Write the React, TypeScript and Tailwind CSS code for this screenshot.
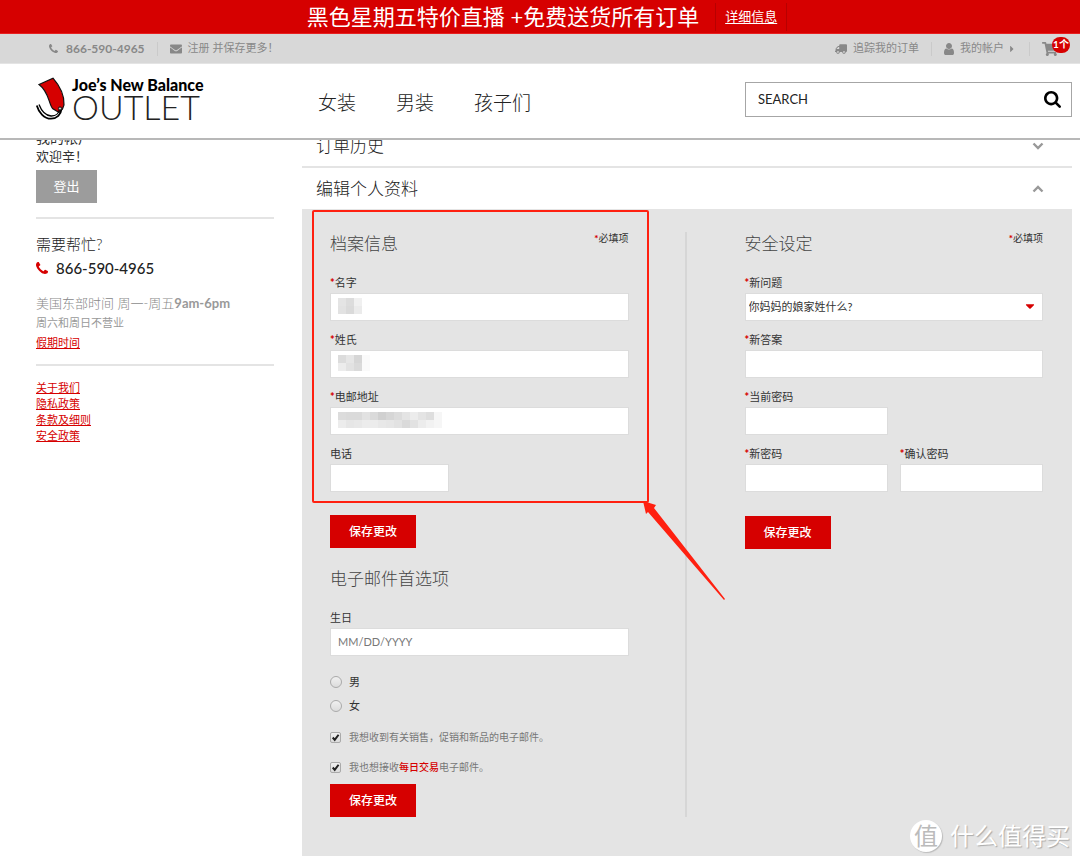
import type { ReactNode } from 'react';
import { FaCaretDown, FaCaretRight, FaEnvelope, FaShoppingCart, FaTruck } from 'react-icons/fa';

const LABEL = 'mb-0.5 block pt-px text-[11px] leading-4 text-[#333]';
const INPUT = 'block h-7 w-full border border-[#dcdcdc] bg-white px-[7px] pb-0.5 text-[11px] text-[#333] outline-none';

// greys of the blurred-out values, row by row
const MASK_FIRST = [
  ['#e4e4e4', '#dcdcdc', '#f0f0f0'],
  ['#e2e2e2', '#dadada', '#ebebeb'],
];
const MASK_LAST = [
  ['#dcdcdc', '#e6e6e6', '#d6d6d6', '#fafafa'],
  ['#ececec', '#e2e2e2', '#dadada', '#fafafa'],
];
const MASK_EMAIL = [
  ['#dcdcdc', '#dadada', '#dadada', '#e2e2e2', '#dadada', '#d0d0d0', '#d6d6d6', '#dcdcdc', '#e4e4e4', '#ececec', '#e4e4e4', '#dedede', '#f6f6f6'],
  ['#ececec', '#e6e6e6', '#e8e8e8', '#ececec', '#ececec', '#e8e8e8', '#e6e6e6', '#e2e2e2', '#dadada', '#e2e2e2', '#ececec', '#f2f2f2', '#f6f6f6'],
];

function PhoneIcon({ className }: { className: string }) {
  return (
    <svg viewBox="0 128 1408 1408" fill="currentColor" className={className}>
      <path d="M1408 1240q0 27-10 70.500t-21 68.500q-21 50-122 106-94 51-186 51-27 0-52.500-3.500t-57.500-12.500-47.500-14.500-55.500-20.500-49-18q-98-35-175-83-128-79-264.500-215.500t-215.500-264.500q-48-77-83-175-3-9-18-49t-20.500-55.500-14.500-47.500-12.500-57.500-3.500-52.500q0-92 51-186 56-101 106-122 25-11 68.500-21t70.500-10q14 0 21 3 18 6 53 76 11 19 30 54t35 63.500 31 53.500q3 4 17.500 25t21.500 35.500 7 28.500q0 20-28.500 50t-62 55-62 53-28.500 46q0 9 5 22.500t8.500 20.500 14 24 11.500 19q76 137 174 235t235 174q2 1 19 11.500t24 14 20.500 8.500 22.500 5q18 0 46-28.500t53-62 55-62 50-28.500q14 0 28.500 7t35.500 21.500 25 17.500q25 15 53.500 31t63.500 35 54 30q70 35 76 53 3 7 3 21z" />
    </svg>
  );
}

function UserIcon() {
  return (
    <svg viewBox="0 128 1280 1536" fill="currentColor" className="mr-1.5 h-3 w-2.5">
      <path d="M1280 1399q0 109-62.500 187t-150.500 78h-854q-88 0-150.500-78t-62.500-187q0-85 8.500-160.500t31.500-152 58.500-131 94-89 134.500-34.500q131 128 313 128t313-128q76 0 134.500 34.500t94 89 58.500 131 31.500 152 8.500 160.500zm-256-887q0 159-112.500 271.500t-271.500 112.500-271.500-112.500-112.500-271.500 112.500-271.500 271.500-112.500 271.500 112.500 112.500 271.500z" />
    </svg>
  );
}

function SearchIcon() {
  return (
    <svg viewBox="0 128 1664 1664" fill="currentColor" className="size-[17px] text-black">
      <path d="M1152 832q0-185-131.500-316.500t-316.500-131.500-316.500 131.500-131.500 316.500 131.500 316.500 316.500 131.500 316.500-131.500 131.500-316.500zm512 832q0 52-38 90t-90 38q-54 0-90-38l-343-342q-179 124-399 124-143 0-273.500-55.500t-225-150-150-225-55.500-273.500 55.500-273.500 150-225 225-150 273.500-55.500 273.500 55.500 225 150 150 225 55.500 273.500q0 220-124 399l343 343q37 37 37 90z" />
    </svg>
  );
}

function Chevron({ className }: { className: string }) {
  return (
    <svg viewBox="0 0 12 8" className={`h-2 w-3 ${className}`}>
      <path d="M1.500 1.500 6 6 10.500 1.500" fill="none" stroke="#999" strokeWidth="2.400" />
    </svg>
  );
}

function Mask({ rows }: { rows: string[][] }) {
  return (
    <div className="pointer-events-none absolute top-[5px] left-2">
      {rows.map((row, y) => (
        <div key={y} className="flex">
          {row.map((color, x) => (
            <span key={x} className="h-2 w-2" style={{ backgroundColor: color }} />
          ))}
        </div>
      ))}
    </div>
  );
}

function Star() {
  return <span className="font-black text-[#d60000]">*</span>;
}

type FieldProps = {
  id: string;
  label: string;
  required?: boolean;
  type?: string;
  placeholder?: string;
  className?: string;
  children?: ReactNode;
};

function Field({ id, label, required, type = 'text', placeholder, className = 'w-full', children }: FieldProps) {
  return (
    <div className={className}>
      <label htmlFor={id} className={LABEL}>
        {required && <Star />}
        {label}
      </label>
      <div className="relative">
        <input id={id} type={type} placeholder={placeholder} className={`${INPUT} placeholder:text-[#777]`} />
        {children}
      </div>
    </div>
  );
}

function SectionTitle({ title, required }: { title: string; required?: boolean }) {
  return (
    <div className="mb-[18px] flex justify-between">
      <h2 className="text-[17px] leading-6 font-light text-[#444]">{title}</h2>
      {required && (
        <span className="text-[10px] leading-3 text-[#333]">
          <Star />
          必填项
        </span>
      )}
    </div>
  );
}

function SaveButton({ className }: { className: string }) {
  return (
    <button type="button" className={`block h-[33px] w-[86px] bg-[#d60000] text-xs font-medium text-white ${className}`}>
      保存更改
    </button>
  );
}

function Logo() {
  return (
    <a href="#" className="flex w-[190px] items-start gap-1.5 text-black">
      <svg viewBox="0 0 30 43" className="h-[43px] w-[30px] shrink-0">
        <path d="M3 7.500 17 1.200C23 8 28.500 18 28 28L26.500 32 23 35.500 16.500 31.500C12.500 26 13 15 3 7.500Z" fill="#d60000" stroke="#111" strokeWidth="1.200" />
        <path d="M.800 28.500C2.500 35 8 41.700 15 41.700 21 41.500 25 37.500 25.500 32" fill="none" stroke="#000" strokeWidth="1.800" />
        <path d="M3 27.500C5.500 34 10 38.500 15 39 20 39.200 23 36 23.500 32" fill="none" stroke="#000" strokeWidth="1.300" />
        <circle cx="24" cy="31.500" r="1.600" fill="#ccc" stroke="#111" />
      </svg>
      <span className="block">
        <span className="block text-[16px] leading-4 font-black whitespace-nowrap">Joe’s New Balance</span>
        <span className="block text-[34px] leading-7 font-light text-[#222]">OUTLET</span>
      </span>
    </a>
  );
}

function Header() {
  return (
    <header className="relative z-10 border-b-2 border-[#b8b8b8] bg-white">
      <div className="flex h-[34px] items-center justify-center border-b border-[#e82020] bg-[#d60000] pl-3.5 text-white">
        <p className="mr-4 text-[22px] leading-8">黑色星期五特价直播 +免费送货所有订单</p>
        <div className="flex h-7 items-center border-x border-[#b80000] px-[9px]">
          <a href="#" className="text-[13px] underline underline-offset-2">详细信息</a>
        </div>
      </div>
      <div className="flex h-[30px] items-center justify-between border-b border-[#e4e4e4] bg-[#d8d8d8] pr-2 pl-[49px] text-[11px] text-[#888]">
        <div className="flex items-center">
          <PhoneIcon className="mr-2 size-[9px]" />
          <span className="text-xs font-bold">866-590-4965</span>
          <span className="mx-3 h-3.5 w-px bg-[#cacaca]" />
          <FaEnvelope className="mr-1.5 size-3" />
          <a href="#">注册 并保存更多！</a>
        </div>
        <div className="flex items-center">
          <FaTruck className="mr-1.5 size-3 -scale-x-100" />
          <a href="#">追踪我的订单</a>
          <span className="mx-3 h-3.5 w-px bg-[#cacaca]" />
          <UserIcon />
          <a href="#" className="flex items-center">
            我的帐户
            <FaCaretRight className="ml-[3px] size-2.5" />
          </a>
          <span className="mx-3 h-3.5 w-px bg-[#cacaca]" />
          <a href="#" className="relative mr-3.5 block">
            <FaShoppingCart className="size-4" />
            <span className="absolute -top-1 left-2.5 flex h-4 w-[18px] items-center justify-center rounded-full bg-[#d60000] text-[10px] font-bold text-white">
              1个
            </span>
          </a>
        </div>
      </div>
      <div className="flex h-[74px] items-center pr-2 pb-1 pl-9">
        <Logo />
        <nav className="mt-2 ml-[92px] flex gap-10 text-[19px] font-light text-[#222]">
          <a href="#">女装</a>
          <a href="#">男装</a>
          <a href="#">孩子们</a>
        </nav>
        <form className="ml-auto flex h-[35px] w-[327px] items-center border border-[#a6a6a6] pr-2.5 pl-3">
          <input
            type="text"
            aria-label="Search"
            placeholder="SEARCH"
            className="min-w-0 flex-1 pt-0.5 text-[13px] outline-none placeholder:text-[#222]"
          />
          <button type="button" aria-label="Submit search">
            <SearchIcon />
          </button>
        </form>
      </div>
    </header>
  );
}

function Sidebar() {
  return (
    <aside className="w-[238px] shrink-0">
      <div className="border-b-2 border-[#e4e4e4] pb-3.5 text-[#333]">
        <p className="text-[14px] leading-[18px]">我的帐户</p>
        <p className="text-[13px] leading-[18px]">欢迎辛！</p>
        <button type="button" className="mt-[5px] block h-[33px] w-[61px] bg-[#9c9c9c] text-[13px] text-white">
          登出
        </button>
      </div>
      <div className="border-b-2 border-[#e4e4e4] pt-[13px] pb-[11px] text-[#999]">
        <p className="text-[15px] leading-6 font-light text-[#222]">需要帮忙?</p>
        <p className="flex items-center text-[15px] leading-6 font-medium text-[#222]">
          <PhoneIcon className="mr-2 size-3 text-[#d60000]" />
          866-590-4965
        </p>
        <p className="mt-[13px] text-[13px] leading-5 font-light text-[#888]">
          美国东部时间 周一-周五<span className="font-bold text-[#999]">9am-6pm</span>
        </p>
        <p className="text-[11px] leading-5">周六和周日不营业</p>
        <p className="text-[11px] leading-5">
          <a href="#" className="text-[#d60000] underline">假期时间</a>
        </p>
      </div>
      <ul className="pt-[14px] text-[11px] leading-4 text-[#d60000] underline">
        <li><a href="#">关于我们</a></li>
        <li><a href="#">隐私政策</a></li>
        <li><a href="#">条款及细则</a></li>
        <li><a href="#">安全政策</a></li>
      </ul>
    </aside>
  );
}

function ProfileForms() {
  return (
    <form className="flex-1 border-r-2 border-[#d6d6d6] pr-14">
      <SectionTitle title="档案信息" required />
      <div className="space-y-2.5">
        <Field id="first-name" label="名字" required>
          <Mask rows={MASK_FIRST} />
        </Field>
        <Field id="last-name" label="姓氏" required>
          <Mask rows={MASK_LAST} />
        </Field>
        <Field id="email" label="电邮地址" required>
          <Mask rows={MASK_EMAIL} />
        </Field>
        <Field id="phone" label="电话" className="w-[119px]" />
      </div>
      <SaveButton className="mt-[23px] mb-[19px]" />

      <SectionTitle title="电子邮件首选项" />
      <Field id="birthday" label="生日" placeholder="MM/DD/YYYY" />
      <div className="mt-3.5 mb-[9px] text-[11px] text-[#333]">
        {['男', '女'].map((gender) => (
          <label key={gender} className="flex h-6 items-center gap-[7px]">
            <input
              type="radio"
              name="gender"
              className="size-3 appearance-none rounded-full border border-[#aaa] bg-linear-to-b from-[#f0f0f0] to-[#dcdcdc]"
            />
            {gender}
          </label>
        ))}
      </div>
      <div className="space-y-2.5 text-[10px] text-[#777]">
        <CheckRow>我想收到有关销售，促销和新品的电子邮件。</CheckRow>
        <CheckRow>
          我也想接收<span className="font-medium text-[#d60000]">每日交易</span>电子邮件。
        </CheckRow>
      </div>
      <SaveButton className="mt-[7px]" />
    </form>
  );
}

function CheckRow({ children }: { children: ReactNode }) {
  return (
    <label className="flex h-5 items-center gap-2">
      <span className="relative block size-[11px]">
        <input
          type="checkbox"
          defaultChecked
          className="block size-[11px] appearance-none rounded-xs border border-[#aaa] bg-linear-to-b from-[#f0f0f0] to-[#dcdcdc]"
        />
        <svg viewBox="0 0 10 10" className="pointer-events-none absolute inset-0">
          <path d="M2.500 5 4.300 7.200 7.800 2.500" fill="none" stroke="#222" strokeWidth="1.800" />
        </svg>
      </span>
      <span>{children}</span>
    </label>
  );
}

function SecurityForm() {
  return (
    <form className="flex-1 pl-[58px]">
      <SectionTitle title="安全设定" required />
      <div className="space-y-2.5">
        <div>
          <label htmlFor="question" className={LABEL}>
            <Star />
            新问题
          </label>
          <div className="relative">
            <select
              id="question"
              className="block h-7 w-full appearance-none border border-[#dcdcdc] bg-white px-[3px] text-[11px] text-[#333]"
            >
              <option>你妈妈的娘家姓什么?</option>
            </select>
            <FaCaretDown className="pointer-events-none absolute top-1.5 right-1.5 size-3.5 text-[#d60000]" />
          </div>
        </div>
        <Field id="answer" label="新答案" required />
        <div className="grid grid-cols-2 gap-x-3 gap-y-2.5">
          <Field id="current-password" label="当前密码" type="password" required className="col-start-1" />
          <Field id="new-password" label="新密码" type="password" required className="col-start-1" />
          <Field id="confirm-password" label="确认密码" type="password" required />
        </div>
      </div>
      <SaveButton className="mt-6" />
    </form>
  );
}

// red box and arrow drawn over the profile form
function Annotation() {
  return (
    <>
      <div className="pointer-events-none absolute top-px left-2.5 h-[293px] w-[337px] rounded-xs border-2 border-[#ff2010]" />
      <svg viewBox="0 0 84 102" className="pointer-events-none absolute top-[292px] left-[341px] h-[102px] w-[84px]">
        <path d="M0 0 13 4 11 7 82 98 81 99 5 11 3 13Z" fill="#ff2010" />
      </svg>
    </>
  );
}

function Watermark() {
  return (
    <div className="absolute right-2.5 bottom-[11px] flex items-center gap-2 text-white">
      <span className="flex size-8 items-center justify-center rounded-full bg-white text-[24px] leading-8 text-[#bbb] shadow-[1px_1px_1px_#bbb]">
        值
      </span>
      <span className="text-[24px] leading-8 text-shadow-[1px_1px_1px_#aaa]">什么值得买</span>
    </div>
  );
}

export default function App() {
  return (
    <div className="relative overflow-hidden bg-white font-[Lato,'Noto_Sans_CJK_SC',sans-serif]">
      <Header />
      <div className="-mt-[11px] flex gap-7 pr-2 pb-[7px] pl-9">
        <Sidebar />
        <main className="min-w-0 flex-1 text-[#222]">
          <button type="button" className="flex w-full items-start justify-between border-b-2 border-[#e4e4e4] pt-[5px] pr-7 pb-2 pl-3.5 text-[17px] leading-6 font-light">
            订单历史
            <Chevron className="mt-2" />
          </button>
          <button type="button" className="flex w-full items-center justify-between pt-[9px] pr-7 pb-2 pl-3.5 text-[17px] leading-6 font-light">
            编辑个人资料
            <Chevron className="rotate-180" />
          </button>
          <div className="relative flex bg-[#e4e4e4] pt-[23px] pr-[29px] pb-[39px] pl-7">
            <ProfileForms />
            <SecurityForm />
            <Annotation />
          </div>
        </main>
      </div>
      <Watermark />
    </div>
  );
}
